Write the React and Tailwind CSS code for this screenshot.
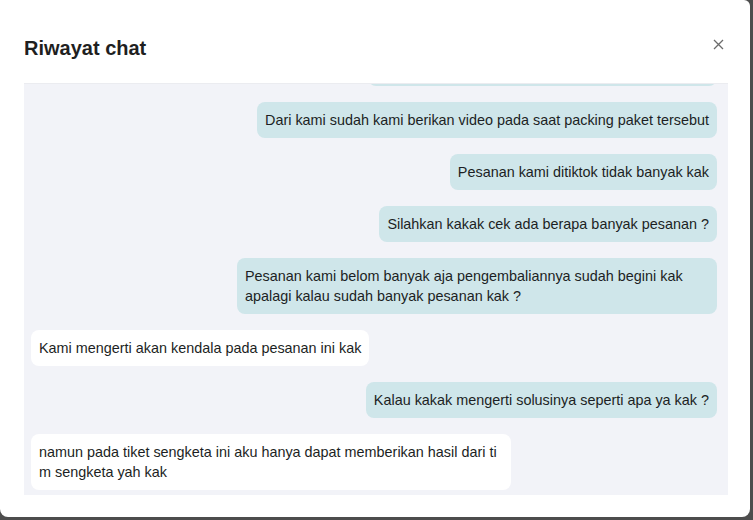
import React from 'react'

const messages = [
  { id: 1, mine: true, text: '', width: 'w-[349px] h-9' },
  { id: 2, mine: true, text: 'Dari kami sudah kami berikan video pada saat packing paket tersebut' },
  { id: 3, mine: true, text: 'Pesanan kami ditiktok tidak banyak kak' },
  { id: 4, mine: true, text: 'Silahkan kakak cek ada berapa banyak pesanan ?' },
  {
    id: 5,
    mine: true,
    lines: ['Pesanan kami belom banyak aja pengembaliannya sudah begini kak', 'apalagi kalau sudah banyak pesanan kak ?'],
  },
  { id: 6, mine: false, text: 'Kami mengerti akan kendala pada pesanan ini kak' },
  { id: 7, mine: true, text: 'Kalau kakak mengerti solusinya seperti apa ya kak ?' },
  {
    id: 8,
    mine: false,
    lines: ['namun pada tiket sengketa ini aku hanya dapat memberikan hasil dari ti', 'm sengketa yah kak'],
  },
]

const Bubble = ({ msg }) => {
  const base = 'rounded-lg px-2 py-2 text-[14.4px] leading-5 text-[#1c1f24]'
  const color = msg.mine ? 'bg-[#cfe6ea]' : 'bg-white'
  return (
    <div className={`flex ${msg.mine ? 'justify-end' : 'justify-start'}`}>
      {msg.lines ? (
        <div className={`${base} ${color} w-[480px]`}>
          {msg.lines.map((l, i) => (
            <div key={i} className="whitespace-nowrap">{l}</div>
          ))}
        </div>
      ) : (
        <div className={`${base} ${color} whitespace-nowrap ${msg.width || ''}`}>{msg.text}</div>
      )}
    </div>
  )
}

export default function App() {
  return (
    <div className="h-[520px] w-full bg-[#4d4d4d]" style={{ fontFamily: '"Liberation Sans", Arial, sans-serif' }}>
      <div className="flex h-[517px] w-[750px] flex-col rounded-b-lg rounded-tr-md bg-white">
        {/* Header */}
        <div className="flex h-[83px] items-start justify-between pl-6 pr-[26px] pt-[36px]">
          <h2 className="text-[20px] font-semibold leading-6 text-[#1f1f1f]">Riwayat chat</h2>
          <button className="mt-[3px] text-[#6b6b6b]">
            <svg width="11" height="11" viewBox="0 0 11 11" fill="none" stroke="currentColor" strokeWidth="1.3">
              <path d="M1 1l9 9M10 1l-9 9" />
            </svg>
          </button>
        </div>

        {/* Chat history */}
        <div className="ml-6 h-[412px] w-[704px] overflow-hidden border-t border-[#ebecf0] bg-[#f2f3f8] pl-[7px] pr-[11px]">
          <div className="-mt-[34px] flex flex-col gap-4">
            {messages.map((m) => (
              <Bubble key={m.id} msg={m} />
            ))}
          </div>
        </div>
      </div>
    </div>
  )
}
